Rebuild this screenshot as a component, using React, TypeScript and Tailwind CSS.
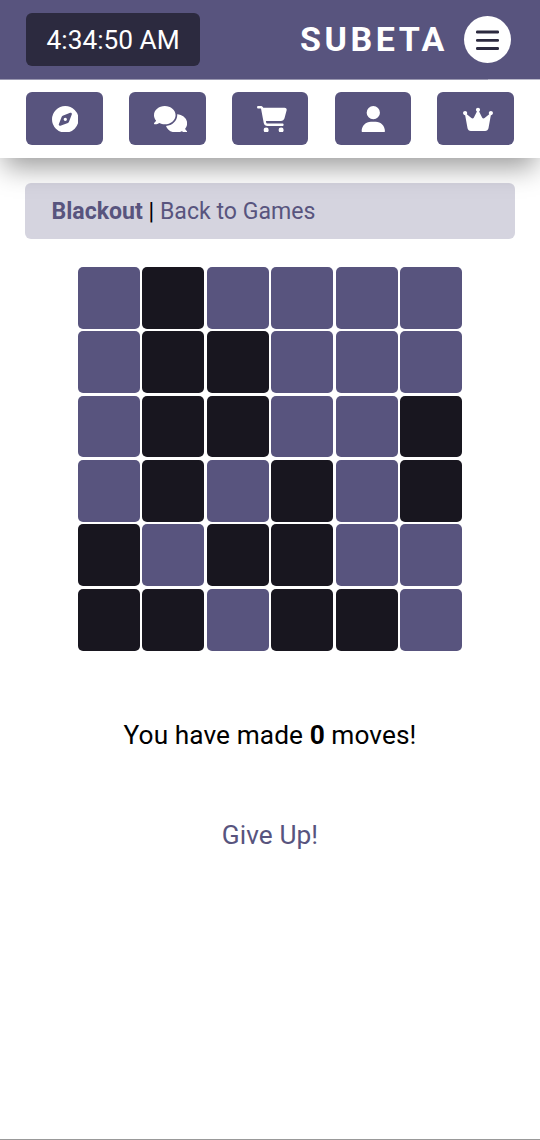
import type { ReactNode } from "react";
import {
  FaCartShopping,
  FaComments,
  FaCompass,
  FaCrown,
  FaUser,
} from "react-icons/fa6";

const board: string[] = [
  "010000",
  "011000",
  "011001",
  "010101",
  "101100",
  "110110",
];

function NavButton({ label, children }: { label: string; children: ReactNode }) {
  return (
    <button
      aria-label={label}
      className="flex h-[53px] w-[76.6px] items-center justify-center rounded-[6px] bg-[#58547e] pt-px pl-px text-[26.6px] text-white"
    >
      {children}
    </button>
  );
}

function MenuIcon() {
  return (
    <svg viewBox="0 0 23 21" className="h-[21px] w-[23px]" fill="currentColor">
      <rect x="0" y="0.6" width="23" height="2.9" rx="1.2" />
      <rect x="0" y="8.9" width="23" height="2.9" rx="1.2" />
      <rect x="0" y="17.1" width="23" height="2.9" rx="1.2" />
    </svg>
  );
}

export default function App() {
  return (
    <div className="flex h-[1140px] w-full flex-col border-b border-[#999999] bg-white font-['Roboto',sans-serif] text-black">
      <header className="shadow-[0_13px_26px_-4px_rgba(0,0,0,0.4)]">
        <div className="flex h-[79px] items-center justify-between bg-[#58547e] pr-[29px] pl-[26.3px]">
          <div className="flex h-[53px] w-[173.7px] items-center justify-center rounded-[6px] bg-[#2c2a3f] pt-[2px] text-[26.25px] text-white">
            4:34:50 AM
          </div>
          <div className="flex items-center">
            <span className="mr-[16px] -mt-[2px] text-[34px] leading-none font-bold tracking-[3.55px] text-white">
              SUBETA
            </span>
            <button
              aria-label="Menu"
              className="flex size-[47px] items-center justify-center rounded-full bg-white pt-[1px] text-[#2c2a3f]"
            >
              <MenuIcon />
            </button>
          </div>
        </div>
        <div className="flex h-px">
          <div className="w-[488px] bg-[#9a98b1]" />
          <div className="flex-1 bg-[#bbbacb]" />
        </div>
        <nav className="flex h-[78px] items-center justify-between bg-white pr-[26px] pb-px pl-[26.4px]">
          <NavButton label="Explore">
            <FaCompass />
          </NavButton>
          <NavButton label="Forums">
            <FaComments className="ml-[5px] h-[26.6px] w-[33.2px]" />
          </NavButton>
          <NavButton label="Shops">
            <FaCartShopping className="ml-[2px] h-[26.6px] w-[30px]" />
          </NavButton>
          <NavButton label="Profile">
            <FaUser />
          </NavButton>
          <NavButton label="Premium">
            <FaCrown className="ml-[3px] h-[26.6px] w-[30px]" />
          </NavButton>
        </nav>
      </header>

      <main className="flex flex-col items-center px-[25px] pt-[25px]">
        <div className="flex h-[56px] w-full items-center rounded-[6px] bg-[#58547e]/25 pt-[2px] pl-[26.5px] text-[23.1px] whitespace-pre">
          <b className="text-[#58547e]">Blackout</b>
          {" | "}
          <a className="text-[#58547e]">Back to Games</a>
        </div>

        <div className="mt-[27.7px] grid grid-cols-6 gap-x-[2.5px] gap-y-[2.55px]">
          {board.flatMap((row, y) =>
            row.split("").map((cell, x) => (
              <button
                key={`${y}-${x}`}
                aria-label={`Row ${y + 1}, column ${x + 1}`}
                className={`size-[61.9px] rounded-[5px] ${cell === "1" ? "bg-[#18161f]" : "bg-[#58547e]"}`}
              />
            )),
          )}
        </div>

        <p className="mt-[64px] text-[26.25px] leading-[40px] tracking-[0.08px]">
          You have made <b>0</b> moves!
        </p>
        <a className="mt-[60px] text-[26.25px] leading-[40px] tracking-[0.08px] text-[#58547e]">
          Give Up!
        </a>
      </main>
    </div>
  );
}
